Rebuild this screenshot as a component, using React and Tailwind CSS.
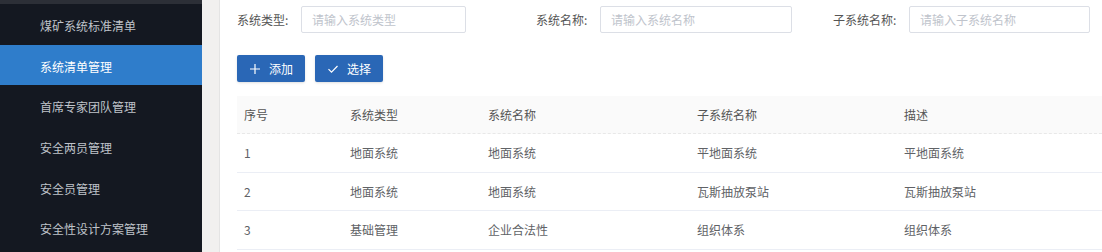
import React from 'react';

const menu = ['煤矿系统标准清单', '系统清单管理', '首席专家团队管理', '安全两员管理', '安全员管理', '安全性设计方案管理'];

const filters = [
  { label: '系统类型:', placeholder: '请输入系统类型', labelW: 'w-[64px]', inputW: 'w-[165px]', gap: 'mr-[70px]' },
  { label: '系统名称:', placeholder: '请输入系统名称', labelW: 'w-[64px]', inputW: 'w-[192px]', gap: 'mr-[41px]' },
  { label: '子系统名称:', placeholder: '请输入子系统名称', labelW: 'w-[76px]', inputW: 'w-[181px]', gap: '' },
];

const rows = [
  ['1', '地面系统', '地面系统', '平地面系统', '平地面系统'],
  ['2', '地面系统', '地面系统', '瓦斯抽放泵站', '瓦斯抽放泵站'],
  ['3', '基础管理', '企业合法性', '组织体系', '组织体系'],
];

const cols = 'grid grid-cols-[106px_138px_209px_207px_1fr]';

export default function App() {
  return (
    <div className="flex h-[252px] w-[1102px] overflow-hidden bg-white text-[12px] font-['Noto_Sans_CJK_SC','Noto_Sans',sans-serif]">
      {/* Sidebar */}
      <aside className="w-[202px] shrink-0 bg-[#141821] border-t-[4px] border-[#2c2f37]">
        <ul>
          {menu.map((m, i) => (
            <li
              key={m}
              className={`h-[40.6px] flex items-center pl-[40px] pt-[4px] ${
                i === 1 ? 'bg-[#2f7dcb] text-white' : 'text-[#bfc3ca]'
              }`}
            >
              {m}
            </li>
          ))}
        </ul>
      </aside>

      <div className="w-[18px] shrink-0 bg-[#f1f0ef] border-r border-[#e4e4e4]" />

      {/* Main */}
      <main className="flex-1 pl-[17px] pt-[6px] text-[#606266]">
        <div className="flex items-center">
          {filters.map((f) => (
            <div key={f.label} className={`flex items-center ${f.gap}`}>
              <span className={`${f.labelW} text-[#555]`}>{f.label}</span>
              <div className={`${f.inputW} h-[27px] border border-[#dcdfe6] rounded-[2px] flex items-center pl-[10px] text-[#c0c4cc]`}>
                {f.placeholder}
              </div>
            </div>
          ))}
        </div>

        <div className="flex gap-[10px] mt-[22px]">
          <button className="w-[68px] h-[27px] bg-[#2a67b6] text-white rounded-[2px] flex items-center justify-center gap-[8px] shadow-sm">
            <svg width="12" height="12" viewBox="0 0 12 12" fill="none" stroke="white" strokeWidth="1.2">
              <path d="M6 1v10M1 6h10" />
            </svg>
            <span>添加</span>
          </button>
          <button className="w-[68px] h-[27px] bg-[#2a67b6] text-white rounded-[2px] flex items-center justify-center gap-[8px] shadow-sm">
            <svg width="12" height="12" viewBox="0 0 12 12" fill="none" stroke="white" strokeWidth="1.2">
              <path d="M1.5 6.2l3 3L10.5 3" />
            </svg>
            <span>选择</span>
          </button>
        </div>

        <div className="mt-[14px]">
          <div className={`${cols} h-[38px] items-center bg-[#fafafa] border-b border-dashed border-[#e8e8e8] text-[#555]`}>
            {['序号', '系统类型', '系统名称', '子系统名称', '描述'].map((h) => (
              <div key={h} className="pl-[7px]">{h}</div>
            ))}
          </div>
          {rows.map((r) => (
            <div key={r[0]} className={`${cols} h-[38.7px] items-center border-b border-[#ebeef5]`}>
              {r.map((c, i) => (
                <div key={i} className="pl-[7px]">{c}</div>
              ))}
            </div>
          ))}
        </div>
      </main>
    </div>
  );
}
